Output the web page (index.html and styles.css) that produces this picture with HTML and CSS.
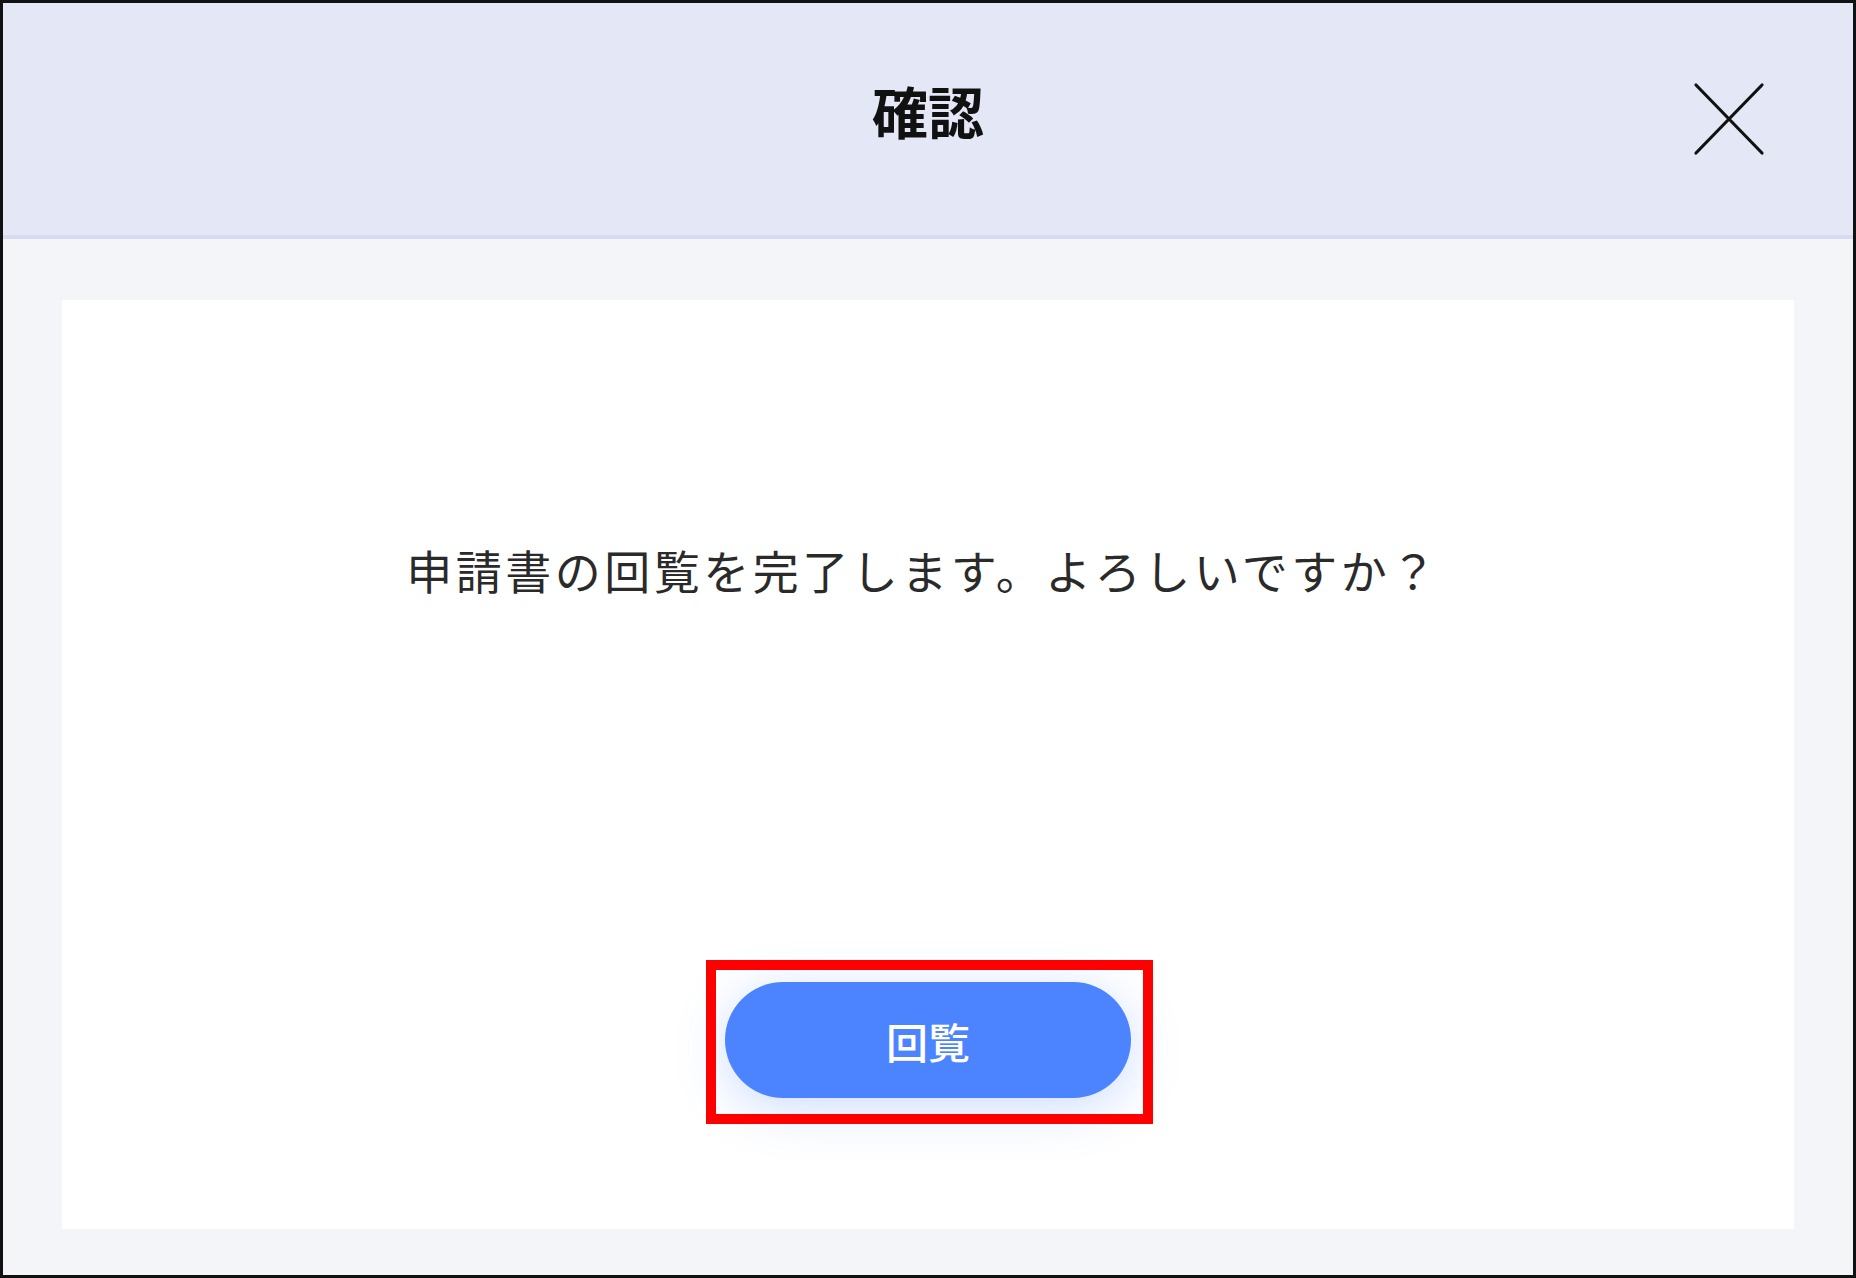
FILE: index.html
```html
<!DOCTYPE html>
<html lang="ja">
<head>
<meta charset="utf-8">
<title>確認</title>
<link rel="stylesheet" href="styles.css">
</head>
<body>
<div class="dialog">
  <header class="dialog-header">
    <span class="spacer"></span>
    <h1 class="dialog-title">確認</h1>
    <button class="close-btn" aria-label="閉じる">
      <svg width="72" height="76" viewBox="0 0 72 76">
        <path d="M3 4 L69 72 M69 4 L3 72" stroke="#111" stroke-width="3.2" stroke-linecap="round" fill="none"/>
      </svg>
    </button>
  </header>
  <div class="dialog-body">
    <div class="panel">
      <p class="message">申請書の回覧を完了します。よろしいですか？</p>
      <div class="action">
        <button class="primary-btn">回覧</button>
        <span class="highlight"></span>
      </div>
    </div>
  </div>
</div>
</body>
</html>
```

FILE: styles.css
```css
html, body {
  margin: 0;
  padding: 0;
}
body {
  width: 1856px;
  height: 1278px;
  font-family: "Noto Sans CJK JP", "Noto Sans", sans-serif;
  background: #f4f5f9;
}
.dialog {
  box-sizing: border-box;
  width: 1856px;
  height: 1278px;
  border: 3px solid #111;
  display: flex;
  flex-direction: column;
  background: #f4f5f9;
}
.dialog-header {
  box-sizing: border-box;
  height: 236px;
  flex: none;
  background: #e4e8f6;
  border-bottom: 4px solid #d6daf2;
  display: grid;
  grid-template-columns: 1fr auto 1fr;
  align-items: center;
}
.dialog-title {
  margin: 0;
  font-size: 56px;
  font-weight: 700;
  color: #111;
  line-height: 1;
  padding-bottom: 18px;
}
.close-btn {
  justify-self: end;
  margin-right: 88px;
  padding: 0;
  border: 0;
  background: none;
  display: flex;
  margin-top: 0;
}
.dialog-body {
  flex: 1;
  display: flex;
  padding: 61px 59px 46px;
}
.panel {
  flex: 1;
  background: #ffffff;
  display: flex;
  flex-direction: column;
  align-items: center;
}
.message {
  margin: 235px 0 0;
  font-size: 46px;
  line-height: 69px;
  letter-spacing: 3.5px;
  color: #2a2a2a;
  padding-right: 10px;
}
.action {
  position: relative;
  margin-top: 378px;
}
.primary-btn {
  width: 406px;
  height: 116px;
  border: 0;
  border-radius: 58px;
  background: #4b84fe;
  color: #fff;
  font-family: "Noto Sans CJK JP", "Noto Sans", sans-serif;
  font-size: 42px;
  font-weight: 500;
  box-shadow: 0 10px 50px rgba(75, 132, 254, 0.28);
  display: block;
}
.highlight {
  position: absolute;
  top: -22px;
  left: -19px;
  right: -22px;
  bottom: -26px;
  border: 10px solid #ff0000;
  pointer-events: none;
}
```
